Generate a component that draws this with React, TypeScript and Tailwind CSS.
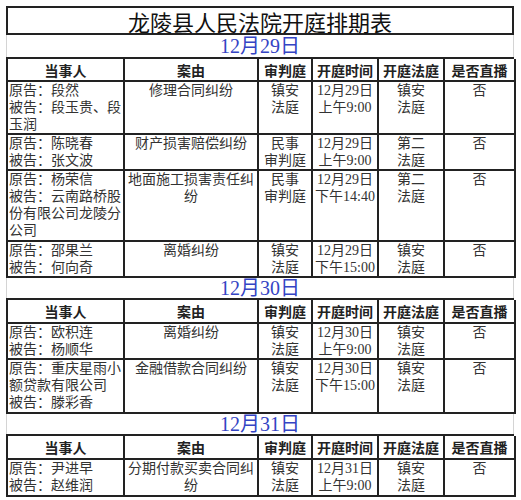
import React from "react";

type Row = { h: string; cells: string[][] };
type Section = { date: string; dateH: string; headH: string; rows: Row[] };

const sections: Section[] = [
  {
    date: "12月29日",
    dateH: "h-[22px]",
    headH: "h-[25px]",
    rows: [
      { h: "h-[53px]", cells: [["原告：段然", "被告：段玉贵、段", "玉润"], ["修理合同纠纷"], ["镇安", "法庭"], ["12月29日", "上午9:00"], ["镇安", "法庭"], ["否"]] },
      { h: "h-[36px]", cells: [["原告：陈晓春", "被告：张文波"], ["财产损害赔偿纠纷"], ["民事", "审判庭"], ["12月29日", "上午9:00"], ["第二", "法庭"], ["否"]] },
      { h: "h-[71px]", cells: [["原告：杨荣信", "被告：云南路桥股", "份有限公司龙陵分", "公司"], ["地面施工损害责任纠", "纷"], ["民事", "审判庭"], ["12月29日", "下午14:40"], ["第二", "法庭"], ["否"]] },
      { h: "h-[36px]", cells: [["原告：邵果兰", "被告：何向奇"], ["离婚纠纷"], ["镇安", "法庭"], ["12月29日", "下午15:00"], ["镇安", "法庭"], ["否"]] },
    ],
  },
  {
    date: "12月30日",
    dateH: "h-[20px]",
    headH: "h-[26px]",
    rows: [
      { h: "h-[36px]", cells: [["原告：欧积连", "被告：杨顺华"], ["离婚纠纷"], ["镇安", "法庭"], ["12月30日", "上午9:00"], ["镇安", "法庭"], ["否"]] },
      { h: "h-[54px]", cells: [["原告：重庆星雨小", "额贷款有限公司", "被告：滕彩香"], ["金融借款合同纠纷"], ["镇安", "法庭"], ["12月30日", "下午15:00"], ["镇安", "法庭"], ["否"]] },
    ],
  },
  {
    date: "12月31日",
    dateH: "h-[20px]",
    headH: "h-[26px]",
    rows: [
      { h: "h-[37px]", cells: [["原告：尹进早", "被告：赵维润"], ["分期付款买卖合同纠", "纷"], ["镇安", "法庭"], ["12月31日", "上午9:00"], ["镇安", "法庭"], ["否"]] },
    ],
  },
];

const headers = ["当事人", "案由", "审判庭", "开庭时间", "开庭法庭", "是否直播"];
const cols = "grid grid-cols-[117px_134px_54px_66px_66px_71px]";

export default function App() {
  return (
    <div className="w-[521px] h-[500px] bg-white overflow-hidden pt-[6px] pl-[6px]">
      <div className="w-[508px] flex flex-col">
        <div className="h-[29px] border-2 border-[#222] flex items-center justify-center text-[22px] leading-[24px] text-[#111] font-['Noto_Sans_CJK_SC',sans-serif]">
          龙陵县人民法院开庭排期表
        </div>
        {sections.map((s, si) => (
          <React.Fragment key={si}>
            <div
              className={
                s.dateH +
                " border-x border-x-[#d4d4d4] flex items-center justify-center text-[20px] leading-[20px] text-[#3444c4] font-['Liberation_Serif','Noto_Sans_CJK_SC',serif]"
              }
            >
              {s.date}
            </div>
            <div className={cols + " " + s.headH + " border-t-2 border-l-2 border-[#222]"}>
              {headers.map((h, i) => (
                <div
                  key={i}
                  className="border-r-2 border-b-2 border-[#222] flex items-center justify-center text-[14px] leading-[18px] font-bold text-[#222] whitespace-nowrap font-['Noto_Sans_CJK_SC',sans-serif]"
                >
                  {h}
                </div>
              ))}
            </div>
            {s.rows.map((r, ri) => (
              <div key={ri} className={cols + " " + r.h + " border-l-2 border-[#222]"}>
                {r.cells.map((lines, ci) => (
                  <div
                    key={ci}
                    className={
                      "border-r-2 border-b-2 border-[#222] flex flex-col overflow-hidden text-[14px] text-[#333] whitespace-nowrap font-['Liberation_Serif','Noto_Sans_CJK_SC',serif] " +
                      (ci === 0 ? "items-start pl-[1px]" : "items-center")
                    }
                  >
                    {lines.map((l, li) => (
                      <div key={li} className="h-[17px] leading-[17px] shrink-0">
                        {l}
                      </div>
                    ))}
                  </div>
                ))}
              </div>
            ))}
          </React.Fragment>
        ))}
      </div>
    </div>
  );
}
